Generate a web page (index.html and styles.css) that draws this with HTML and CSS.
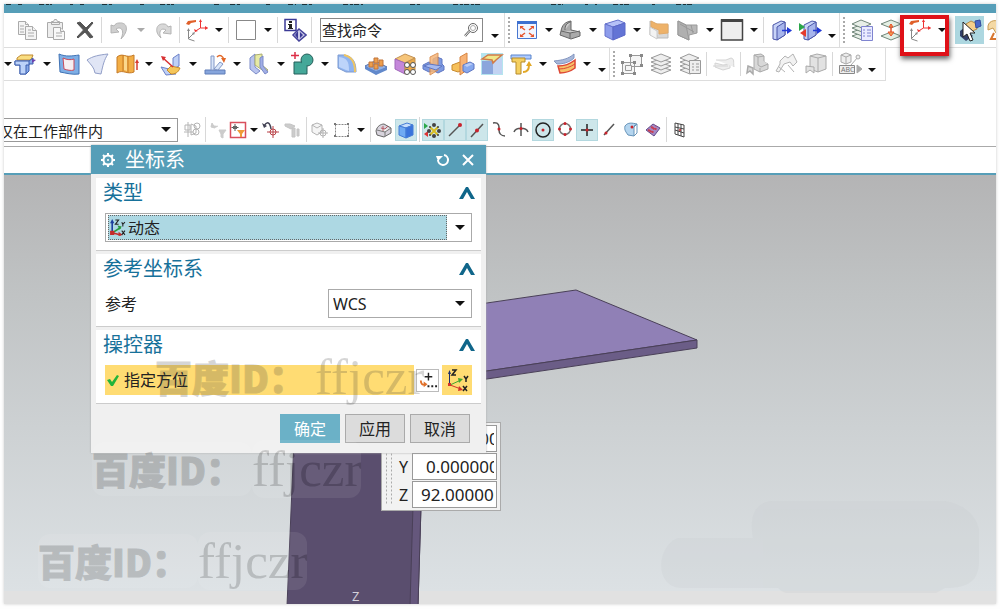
FILE: index.html
```html
<!DOCTYPE html>
<html lang="zh-CN">
<head>
<meta charset="utf-8">
<title>坐标系</title>
<link rel="stylesheet" href="styles.css">
</head>
<body>
<div class="app">
  <header class="menubar">
    <svg width="992" height="2" aria-hidden="true"><path stroke="#17313b" stroke-width="2" stroke-dasharray="5 2 3 1" d="M2 0h6M14 0h4M35 0h13M66 0h3M76 0h4M98 0h11M136 0h4M156 0h14M210 0h5M226 0h10M262 0h4M284 0h8M298 0h11M339 0h20M406 0h10M449 0h27M547 0h12M581 0h3M591 0h2M609 0h16M648 0h3M672 0h16"/></svg>
  </header>

  <div class="toolbar row-one">
    <div class="group first">
      <button class="tool" aria-label="复制"><svg viewBox="0 0 24 24"><g fill="#f4f4f4" stroke="#aaa"><path d="M3.500 3.500h7l3 3v10h-10z"/><path d="M10.500 8.500h7l4 4v9h-11z"/><path d="M10.500 3.500v3h3M17.500 8.500v4h4M5 8h4M5 11h4M5 14h4M13 15h6M13 18h6M13 12h3"/></g></svg></button>
      <button class="tool" aria-label="粘贴"><svg viewBox="0 0 24 24"><g fill="#eee" stroke="#aaa"><path d="M3.500 4.500h15v15h-15zM7.500 6.500v-3h2l1-2h2l1 2h2v3z"/><path fill="#f8f8f8" d="M9.500 9.500h7l4 4v8h-11z"/><path d="M16.500 9.500v4h4M12 15h6M12 18h6"/></g></svg></button>
      <button class="tool" aria-label="删除"><svg viewBox="0 0 24 24"><path fill="#555" stroke="#555" d="M4 5l3-1 6 6 6-6 1 1-6 7 6 7-3 1-5-6-7 6-1-1 6.500-7z"/></svg></button>
      <span class="sep"></span>
      <button class="tool" aria-label="撤消"><svg viewBox="0 0 24 24"><path fill="#cfcfcf" stroke="#b4b4b4" d="M4 7v8l8-1-3-3c5-3 9 1 5 10 8-8 7-17-2-16-2 0-4 1-5 3z"/></svg></button>
      <button class="drop muted" aria-label="撤消列表"></button>
      <button class="tool" aria-label="重做"><svg viewBox="0 0 24 24"><path fill="#d8d8d8" stroke="#b4b4b4" d="M20 8v8l-8-1 3-3c-5-3-8 2-5 8-7-6-5-15 3-14 2 0 3 1 4 3z"/></svg></button>
      <span class="sep"></span>
      <button class="tool" aria-label="坐标系"><svg viewBox="0 0 24 24"><path stroke="#e33" d="M15.500 2v8h7M15.500 10l-5 3"/><path fill="#e33" d="M14 4l1.500-3L17 4zM20 8l3 2-3 2zM9 11l1 3 3-1z"/><path fill="#e0602a" d="M1 6l2-3 8-1v2l-5 1-2 2z"/><path stroke="#888" d="M3.500 11v10l6 2M4 20l5-5"/><path fill="#888" d="M2 13l1.500-3L5 13zM7 15l3-1-1 3z"/></svg></button>
      <button class="drop" aria-label="坐标系列表"></button>
      <span class="sep"></span>
      <button class="tool" aria-label="颜色"><svg viewBox="0 0 24 24"><path fill="#fff" stroke="#888" d="M2.500 2.500h19v19h-19z"/></svg></button>
      <button class="drop" aria-label="颜色列表"></button>
      <span class="sep"></span>
      <button class="tool" aria-label="信息"><svg viewBox="0 0 24 24"><path fill="#fff" stroke="#3b3a96" stroke-width="1.500" d="M2 1.500h11v11H2z"/><path fill="#222" d="M6 3h3v2H6zM5 6h4v4h1v1H5v-1h1V7H5z"/><path fill="#c9c9e8" stroke="#45439a" stroke-width="1.500" d="M16 11l7 6-7 6-6-6z"/><path fill="#3b3a96" d="M15 13v8l-3-4zM17 14l3 3-3 3z"/></svg></button>
      <span class="sep"></span>
      <label class="search"><input type="text" value="查找命令" aria-label="查找命令"><svg viewBox="0 0 16 16"><circle cx="10" cy="6" r="4.500" fill="#fff" stroke="#666"/><circle cx="10" cy="6" r="2.500" fill="none" stroke="#aaa"/><path d="M6.500 9L2 14" stroke="#666" stroke-width="2.500"/><path d="M6.500 9L2 14" stroke="#eee"/></svg></label>
      <button class="drop low" aria-label="工具条选项"></button>
    </div>
    <div class="group">
      <span class="grip"></span>
      <button class="tool" aria-label="适合窗口"><svg viewBox="0 0 24 24"><path fill="#f1f5ff" stroke="#4777d0" d="M2.500 3.500h19v17h-19z"/><path fill="#3d70d0" d="M2 3h20v3H2z"/><path stroke="#e6552e" stroke-width="1.500" d="M6 9l4 3M18 9l-4 3M6 18l4-3M18 18l-4-3"/><path fill="#e6552e" d="M5 8h4l-4 3zM19 8h-4l4 3zM5 19h4l-4-3zM19 19h-4l4-3z"/></svg></button>
      <button class="drop" aria-label="适合窗口列表"></button>
      <button class="tool" aria-label="定向视图"><svg viewBox="0 0 24 24"><path fill="#aaa" stroke="#666" d="M2 13c1-6 4-9 10-10v9l9 2v4l-9 3L1 17z"/><path fill="#ccc" stroke="#666" d="M2 13l9 2 10-2M11 15v5M6 12c0-4 1-7 6-8"/></svg></button>
      <button class="drop" aria-label="定向视图列表"></button>
      <button class="tool" aria-label="着色"><svg viewBox="0 0 24 24"><path fill="#b5c1f7" stroke="#6672cc" d="M2 6l13-4 7 3-12 4z"/><path fill="#8d9ceb" stroke="#6672cc" d="M2 6l8 3v13l-8-4z"/><path fill="#6374d5" stroke="#5b68c8" d="M10 9l12-4v12l-12 5z"/></svg></button>
      <button class="drop" aria-label="着色列表"></button>
      <button class="tool" aria-label="剪切截面"><svg viewBox="0 0 24 24"><path fill="#d8d8d8" stroke="#bbb" d="M3 3l6 3 12 1v13H10v-3H3z"/><path fill="#eeb269" stroke="#e0aa6a" d="M4 3l6 3h11v9l-9 1v-4L4 9z"/><path fill="#f3f3f3" stroke="#ccc" d="M3 9l7 4v8l-7-4z"/></svg></button>
      <button class="tool" aria-label="编辑截面"><svg viewBox="0 0 24 24"><path fill="#b8b8b8" stroke="#999" d="M2 3l8 4h11v8l-8 2v5L2 17z"/><path fill="#b0b0b0" stroke="#999" d="M2 3l8 4 3 15-11-5zM4 6l14 8M15 7l2 8"/></svg></button>
      <button class="drop" aria-label="截面列表"></button>
      <button class="tool" aria-label="背景"><svg viewBox="0 0 24 24"><path fill="#eee" stroke="#444" stroke-width="1.500" d="M1.500 2h21v20h-21z"/><path fill="#444" d="M1 1h22v3H1z"/></svg></button>
      <button class="drop" aria-label="背景列表"></button>
      <span class="sep"></span>
      <button class="tool" aria-label="显示"><svg viewBox="0 0 24 24"><path fill="#c8d3f7" stroke="#4a55a8" d="M4 7l8-4 4 1v13l-8 5-4-1z"/><path fill="#a7b5ec" stroke="#4a55a8" d="M8 9l8-5v13l-8 5z"/><path stroke="#2239d6" stroke-width="1.500" d="M13 12.500h6"/><path fill="#2239d6" d="M18 9l5 3.500-5 3.500z"/></svg></button>
      <button class="tool" aria-label="隐藏"><svg viewBox="0 0 24 24"><path fill="#c8d3f7" stroke="#4a55a8" d="M6 7l8-4 4 1v13l-8 5-4-1z"/><path fill="#a7b5ec" stroke="#4a55a8" d="M10 9l8-5v13l-8 5z"/><path fill="#2aa64a" d="M1 5l6 4-6 4z"/><path fill="#e43b2e" d="M8 11l-6 4 6 4z"/><path stroke="#2239d6" stroke-width="1.500" d="M15 12.500h6"/><path fill="#2239d6" d="M19 9l5 3.500-5 3.500z"/></svg></button>
      <button class="drop low" aria-label="工具条选项"></button>
    </div>
    <div class="group last">
      <span class="grip"></span>
      <button class="tool" aria-label="图层设置"><svg viewBox="0 0 24 24"><g fill="#e8efe8" stroke="#71877a"><path d="M2 18l9-3 10 3-9 4z"/><path d="M2 14l9-3 10 3-9 4z"/><path d="M2 10l9-3 10 3-9 4z"/><path d="M2 6l9-4 10 4-9 4z"/></g><path fill="#e9ebff" stroke="#7f84d0" d="M11.500 8.500h11v14h-11z"/><path stroke="#7f84d0" d="M13 12h2M13 15h2M13 18h2M17 12h4M17 15h4M17 18h4"/></svg></button>
      <button class="tool" aria-label="移动至图层"><svg viewBox="0 0 24 24"><g fill="#e4efe4" stroke="#71877a"><path d="M2 6l10-4 10 4-10 4z"/><path d="M2 18l10-4 10 4-10 4z"/></g><path stroke="#e6552e" stroke-width="1.500" d="M12 6v8"/><path fill="#f29a50" stroke="#e6552e" d="M10 9h4l-2-3zM9 14h6l-3 4z"/></svg></button>
      <span class="marked">
        <button class="tool" aria-label="动态坐标系"><svg viewBox="0 0 24 24"><path stroke="#e33" d="M15.500 2v8h7M15.500 10l-5 3"/><path fill="#e33" d="M14 4l1.500-3L17 4zM20 8l3 2-3 2zM9 11l1 3 3-1z"/><path fill="#e0602a" d="M1 6l2-3 8-1v2l-5 1-2 2z"/><path stroke="#888" d="M3.500 11v10l6 2M4 20l5-5"/><path fill="#888" d="M2 13l1.500-3L5 13zM7 15l3-1-1 3z"/></svg></button>
        <button class="drop" aria-label="坐标系命令列表"></button>
      </span>
      <button class="tool on" aria-label="选择对象"><svg viewBox="0 0 24 24"><path fill="#f6cf8a" stroke="#b58c48" d="M8 6l5-3 6 3v5l-7 3-4-3z"/><path fill="#4a68c8" stroke="#334c9e" d="M17 3l5-1 1 6-5 2z"/><path fill="#32406a" d="M2 13l4-3 9 8-7 5-6-5z"/><path fill="#fff" stroke="#222" d="M5 4v15l4-3 3 7 3-1-3-7h5z"/></svg></button>
      <button class="tool" aria-label="可视化"><svg viewBox="0 0 24 24"><path fill="#f4d9a5" stroke="#c79c54" d="M1 8c1-6 9-7 14-3v9l-6 1-3-5-5 2z"/><path stroke="#d8752e" stroke-width="2" d="M7 15l-3 6h7"/></svg></button>
    </div>
  </div>

  <div class="toolbar row-two">
    <div class="group">
      <button class="drop cut" aria-label="特征列表"></button>
      <button class="tool" aria-label="拉伸"><svg viewBox="0 0 24 24"><path fill="#f9dd80" stroke="#c08a32" d="M4 6l4-3h12l-2 5H4z"/><path fill="#85a8e8" stroke="#3d5fae" d="M2 9h14l4-3v6h-4v7l-3 3H7v-9H2z"/><path fill="#bcd2f8" stroke="#3d5fae" d="M2 9h14v4h-3v9H7v-9H2z"/><path fill="#6c42ad" d="M19 7l4 1-4 3z"/></svg></button>
      <button class="drop" aria-label="拉伸列表"></button>
      <button class="tool" aria-label="通过曲线网格"><svg viewBox="0 0 24 24"><path fill="#7eaee5" stroke="#4173b5" d="M2 2c7 3 13 2 20 1v19c-7 1-13-1-19-2z"/><path fill="#f6eff1" stroke="#c84a5b" d="M6 6c4 2 8 2 11 1v11c-3 1-7 0-10-1z"/></svg></button>
      <button class="tool" aria-label="扫掠面"><svg viewBox="0 0 24 24"><path fill="#e0e5f5" stroke="#929fc8" d="M1 8c6-4 12-5 21-6-4 6-5 11-7 20l-6-1C8 15 5 13 1 8z"/></svg></button>
      <button class="tool" aria-label="抽取"><svg viewBox="0 0 24 24"><path fill="#f3ae45" stroke="#c47a28" d="M2 5c6-5 9 2 17-2v17c-7 3-11-3-17 1z"/><path stroke="#c47a28" d="M8 3v16M13 4v17"/><path fill="#fbd88d" d="M9 4l3 1v14l-3-1z"/><path stroke="#d83d2e" stroke-width="1.500" d="M22 10v8"/><path fill="#d83d2e" d="M20 11l2-4 2 4z"/></svg></button>
      <button class="drop" aria-label="抽取列表"></button>
      <button class="tool" aria-label="面倒圆"><svg viewBox="0 0 24 24"><path fill="#bfd0f5" stroke="#6b80c8" d="M2 15l8 2 7 5-10 1zM14 6l6-4v12l-6 3z"/><path fill="#f5c65a" stroke="#c98c29" d="M12 14l9 2c-2 5-5 6-9 6l-4-4z"/><path stroke="#d83032" stroke-width="1.500" d="M4 6l10 9"/><path fill="#d83032" d="M2 4l5 1-3 4z"/></svg></button>
      <button class="drop" aria-label="面倒圆列表"></button>
      <button class="tool" aria-label="修剪体"><svg viewBox="0 0 24 24"><path fill="#86a5dc" stroke="#5f7cb8" d="M2 18h20v4H2z"/><path fill="#d9e6fa" stroke="#8297c6" d="M8 4h3v14H8zM11 17l6-7 3 2-5 6z"/><path stroke="#e26828" stroke-width="1.500" d="M14 5c3-3 6-1 7 3"/><path fill="#e26828" d="M18 6h5l-2 5z"/></svg></button>
      <button class="drop" aria-label="修剪体列表"></button>
      <button class="tool" aria-label="镜像"><svg viewBox="0 0 24 24"><path fill="#b9c4ee" stroke="#7b8bc8" d="M3 6l5-4v13l5 4-4 3-6-5z"/><path fill="#e6eaa5" stroke="#adae70" d="M8 3l7-1v11l6 5-3 2-10-7z"/><path fill="#a1aee6" stroke="#7b8bc8" d="M13 6l3-2v10l5 6-3 2-5-7z"/></svg></button>
      <button class="drop" aria-label="镜像列表"></button>
      <button class="tool" aria-label="合并"><svg viewBox="0 0 24 24"><g fill="#45a899" stroke="#255f5a"><path d="M3 10h13v12H3z"/><circle cx="16" cy="8" r="6"/></g><path fill="#45a899" d="M10.500 10.500h5v5h-5z"/><path stroke="#dc2e46" stroke-width="1.500" d="M4 0v7M0 3.500h8"/></svg></button>
      <button class="drop" aria-label="合并列表"></button>
      <button class="tool" aria-label="边倒圆"><svg viewBox="0 0 24 24"><path fill="#8fb4f0" stroke="#7e9bd0" d="M3 3h7c8 2 11 7 11 17H11L3 16z"/><path stroke="#f0c560" stroke-width="2" d="M9 3c8 2 11 7 11 17"/><path fill="#bdd4fa" d="M4 5c8 1 10 4 10 14l-3-1-7-3z"/></svg></button>
      <button class="tool" aria-label="阵列特征"><svg viewBox="0 0 24 24"><path fill="#91b1e5" stroke="#5371ae" d="M1 14l10-5 12 6-11 7z"/><path fill="#6289cb" d="M1 14l11 5v4L1 17zM12 19l11-4v3l-11 5z"/><g fill="#ee9e4b" stroke="#c0753a"><path d="M5 10h4v5H5zM10 6h4v5h-4zM15 8h4v6h-4zM10 12h4v5h-4z"/></g></svg></button>
      <button class="tool" aria-label="阵列面"><svg viewBox="0 0 24 24"><path fill="#f6c579" stroke="#c39152" d="M2 7l10-5 10 4-10 5z"/><path fill="#c487da" stroke="#a068ba" d="M2 7l10 4v11L2 17z"/><path fill="#e9a94a" stroke="#c39152" d="M12 11l10-5v12l-10 4z"/><g fill="#fff" stroke="#555"><circle cx="14" cy="13" r="2.500"/><circle cx="20" cy="13" r="2.500"/><circle cx="14" cy="20" r="2.500"/><circle cx="20" cy="20" r="2.500"/></g></svg></button>
      <button class="tool" aria-label="镜像特征"><svg viewBox="0 0 24 24"><path fill="#7d9ae2" stroke="#5f76c2" d="M1 13l6-3 4 2V7l4-2 5 2v5l2 2v4l-6 3-4-2-5 1-6-3z"/><path fill="#f6b678" stroke="#d78440" d="M8 5l8-4v17l-8 5z" opacity=".85"/><path fill="#a4b9f0" stroke="#5f76c2" d="M2 14l5-2 13 2-6 4z"/></svg></button>
      <button class="tool" aria-label="镜像面"><svg viewBox="0 0 24 24"><path fill="#f6c05a" stroke="#c88a2d" d="M1 13l8-3 5 2v5l-7 3-6-2z"/><path fill="#f7b376" stroke="#d78440" d="M9 5l7-4v17l-7 5z"/><path fill="#86a8ee" stroke="#5f76c2" d="M12 13l7-3 4 2v5l-7 4-4-2z"/><path fill="#b9ccf8" d="M13 13l6-2 3 1-6 3z"/></svg></button>
      <button class="tool" aria-label="抽壳"><svg viewBox="0 0 24 24"><path fill="#b5e5ef" d="M1 1h22v22H1z"/><path fill="#8ba6dc" d="M2 9h11v13H2z"/><path fill="#c2d3f2" d="M13 9l9-3v16h-9z"/><path fill="#f0e789" stroke="#d17b48" stroke-width="1.500" d="M2 7l6-4h14l-6 5-3 3-1-3z"/></svg></button>
      <button class="tool" aria-label="加厚"><svg viewBox="0 0 24 24"><path fill="#aecbff" stroke="#5b85cb" d="M2 3h20v4H2z"/><path fill="#f5d060" stroke="#b78b29" d="M3 6h13v4h-4v12H7V10H3z"/><path stroke="#e2a827" stroke-width="2" d="M14 20c5 0 6-3 6-7"/><path fill="#e2a827" d="M17 14l3-5 3 5z"/></svg></button>
      <button class="drop" aria-label="加厚列表"></button>
      <button class="tool" aria-label="偏置曲面"><svg viewBox="0 0 24 24"><path fill="#a8b8da" stroke="#8396c0" d="M1 9c9-1 14-2 20-7v4C16 11 9 12 4 12z"/><path fill="#f7c268" stroke="#dd4735" stroke-width="1.500" d="M5 14c6 0 12-2 17-6v8c-4 3-9 5-15 5z"/><path stroke="#dd4735" d="M6 17c6 0 11-2 16-5"/></svg></button>
      <button class="drop" aria-label="偏置曲面列表"></button>
      <button class="drop low" aria-label="工具条选项"></button>
    </div>
    <div class="group end">
      <span class="grip"></span>
      <button class="tool" aria-label="组"><svg viewBox="0 0 24 24"><g stroke="#999" fill="#f5f5f5"><path d="M10.500 3.500h11v11h-11zM2.500 10.500h12v11h-12z"/><path d="M5.500 13.500h6v5h-6z"/></g><g fill="#888"><path d="M9 2h3v3H9zM20 2h3v3h-3zM20 12h3v3h-3zM1 9h3v3H1zM13 9h3v3h-3zM1 20h3v3H1zM13 20h3v3h-3z"/></g></svg></button>
      <button class="tool" aria-label="图层"><svg viewBox="0 0 24 24"><g fill="#eee" stroke="#999"><path d="M2 18l10-3 10 3-10 4z"/><path d="M2 14l10-3 10 3-10 4z"/><path d="M2 10l10-3 10 3-10 4z"/><path d="M2 6l10-4 10 4-10 4z"/></g></svg></button>
      <button class="tool" aria-label="图层列表"><svg viewBox="0 0 24 24"><g fill="#eee" stroke="#999"><path d="M2 18l9-3 10 3-9 4z"/><path d="M2 14l9-3 10 3-9 4z"/><path d="M2 10l9-3 10 3-9 4z"/><path d="M2 6l9-4 10 4-9 4z"/><path d="M11.500 8.500h11v13h-11z"/><path d="M14 12h2M14 15h2M14 18h2M18 12h3M18 15h3M18 18h3"/></g></svg></button>
      <span class="sep"></span>
      <button class="tool" aria-label="移动"><svg viewBox="0 0 24 24"><g fill="#eee" stroke="#d4d4d4"><path d="M3 11l8 2 7-1v4l-7 2-8-3z"/><path d="M4 8h10l5-2c4 1 2 4 3 9M1 14h15"/></g></svg></button>
      <span class="sep"></span>
      <button class="tool" aria-label="移动面"><svg viewBox="0 0 24 24"><g fill="#d8d8d8" stroke="#aaa"><path d="M8 3l7-1 3 2v6l4 2v5l-8 3-6-3z"/><path d="M8 3l4 2v8l3 2 7-3M12 5l6-1M14 16v4"/><path stroke-width="1.500" d="M2 14l5 2v6l-3-3-3 2z"/></g></svg></button>
      <button class="tool" aria-label="拉出面"><svg viewBox="0 0 24 24"><g fill="#f2f2f2" stroke="#b4b4b4"><path d="M5 9l5-5 3 2 5-4 4 8-4 4-3-4-6 2-5 8-3-1 4-7z"/><path d="M4 15l6 5M13 13l6 7"/></g></svg></button>
      <button class="tool" aria-label="替换面"><svg viewBox="0 0 24 24"><g fill="#e2e2e2" stroke="#aaa"><path d="M6 4l7-2 9 2v13l-8 3-8-3z"/><path d="M6 4l8 2 8-2M14 6v14"/><path d="M2 14l8 1v6l-4-3-4 3z"/></g></svg></button>
      <span class="sep"></span>
      <button class="tool" aria-label="注释"><svg viewBox="0 0 24 24"><g fill="#eee" stroke="#aaa"><path d="M3 3l5-2 5 2v7l-5 2-5-2z"/><path d="M3 3l5 2 5-2M8 5v7M20 5l-7 8"/><circle cx="20" cy="5" r="2"/><path stroke="#888" d="M1.500 13.500h15v8h-15z"/><path fill="#aaa" d="M19 13l5 4-5 4z"/></g><text x="3" y="20" font-size="7" fill="#777">ABC</text></svg></button>
      <button class="drop low" aria-label="工具条选项"></button>
    </div>
  </div>

  <div class="toolbar row-three">
    <div class="scope"><select aria-label="选择范围"><option>仅在工作部件内</option></select></div>
    <button class="pick" aria-label="约束"><svg viewBox="0 0 20 20"><g stroke="#b4b4b4"><path d="M3 5h5v5H3zM9 4l5 2v7l-5 2zM6 2v15M2 12h9"/><circle cx="15" cy="6" r="3"/><circle cx="14" cy="12" r="3"/></g></svg></button>
    <span class="sep"></span>
    <button class="pick narrow" aria-label="过滤器"><svg viewBox="0 0 20 20"><path fill="#ccc" stroke="#ccc" d="M3 5c3 4 5 2 7 1M4 3l-1 4 4 1zM11 10h7l-3 4v4l-2-1v-3z"/></svg></button>
    <button class="pick narrow" aria-label="过滤设置"><svg viewBox="0 0 20 20"><path stroke="#d94f5d" stroke-width="1.500" d="M2.500 2.500h15v15h-15z"/><path stroke="#555" d="M7 4v7M3.500 7.500h7"/><path fill="#666" d="M5 6h4v3H5z"/><path fill="#ef9b38" d="M9 10h8l-3 4v3h-2v-3z"/></svg></button>
    <button class="drop slim" aria-label="过滤列表"></button>
    <button class="pick" aria-label="捕捉"><svg viewBox="0 0 20 20"><path stroke="#445" stroke-width="1.500" d="M3 6c3-5 6-4 7 3"/><path fill="#445" d="M1 3l2 5 3-2z"/><g stroke="#b94348"><circle cx="12" cy="12" r="3"/><path d="M12 6v12M6 12h12"/></g></svg></button>
    <button class="pick" aria-label="全部"><svg viewBox="0 0 20 20"><path fill="#ccc" stroke="#c4c4c4" d="M2 4h5l5 2-4 3-6-3zM9 8h3v9H9zM14 9h2v7h-2z"/></svg></button>
    <span class="sep"></span>
    <button class="pick" aria-label="选择体"><svg viewBox="0 0 20 20"><g stroke="#b4b4b4"><path fill="#f5f5f5" d="M2 5l5-2 5 2v7l-5 3-5-3z"/><path d="M2 5l5 3 5-3"/><circle cx="13" cy="13" r="3"/><path d="M13 8v10M8 13h10"/></g></svg></button>
    <button class="pick" aria-label="矩形选择"><svg viewBox="0 0 20 20"><path stroke="#888" stroke-dasharray="2 1" d="M3.500 4.500h13v12h-13z"/><path fill="#777" d="M2 3h2v2H2zM15 3h2v2h-2zM2 15h2v2H2zM15 15h2v2h-2z"/></svg></button>
    <button class="drop" aria-label="选择方式列表"></button>
    <span class="sep"></span>
    <button class="pick" aria-label="面规则"><svg viewBox="0 0 20 20"><path fill="#d7d3dc" stroke="#666" d="M2 11c1-5 5-7 8-7l7 4v5l-7 4-7-2z"/><path fill="#eee" stroke="#777" d="M3 10l8 2 6-4M11 12v4"/><path stroke="#b65d67" d="M7 8l4 1 3-3M9 6v5"/></svg></button>
    <button class="pick on" aria-label="体规则"><svg viewBox="0 0 20 20"><path fill="#c6defc" stroke="#457dd6" d="M3 6l8-3 6 2-7 3z"/><path fill="#6faaf3" stroke="#457dd6" d="M3 6l7 2v10l-7-3z"/><path fill="#3a74dc" stroke="#457dd6" d="M10 8l7-3v10l-7 3z"/></svg></button>
    <span class="sep"></span>
    <button class="pick on" aria-label="启用捕捉点"><svg viewBox="0 0 20 20"><path fill="#2aa84a" d="M1 3l4 3-4 3z"/><path fill="#dd3434" d="M5 11l-4 3 4 3z"/><path stroke="#d9bd22" stroke-width="2" d="M7 7l8 8M15 7l-8 8"/><g fill="#444"><circle cx="11" cy="5" r="2"/><circle cx="11" cy="16" r="2"/><circle cx="6" cy="11" r="2"/><circle cx="16" cy="11" r="2"/><circle cx="7" cy="7" r="1"/><circle cx="15" cy="7" r="1"/><circle cx="7" cy="15" r="1"/><circle cx="15" cy="15" r="1"/></g></svg></button>
    <button class="pick on" aria-label="端点"><svg viewBox="0 0 20 20"><path stroke="#555" stroke-width="1.500" d="M4 16L15 5"/><circle cx="15" cy="5" r="2" fill="#c8232c"/></svg></button>
    <button class="pick on" aria-label="中点"><svg viewBox="0 0 20 20"><path stroke="#555" stroke-width="1.500" d="M4 17L16 4"/><circle cx="10" cy="10.500" r="2" fill="#c8232c"/></svg></button>
    <button class="pick" aria-label="控制点"><svg viewBox="0 0 20 20"><path stroke="#555" stroke-width="1.500" d="M4 3c7-1 6 4 6 7s2 6 6 6"/><circle cx="10" cy="9" r="1.500" fill="#c8232c"/></svg></button>
    <button class="pick" aria-label="交点"><svg viewBox="0 0 20 20"><path stroke="#555" stroke-width="1.500" d="M10 3v13M3 12c2-5 12-5 14 0"/><circle cx="10" cy="8.500" r="1.500" fill="#c8232c"/></svg></button>
    <button class="pick on" aria-label="圆弧中心"><svg viewBox="0 0 20 20"><circle cx="10" cy="10" r="7" stroke="#222" stroke-width="1.500"/><circle cx="10" cy="10" r="1.500" fill="#c8232c"/></svg></button>
    <button class="pick" aria-label="象限点"><svg viewBox="0 0 20 20"><circle cx="10" cy="9" r="5.500" stroke="#777" stroke-width="1.500"/><g fill="#c8232c"><circle cx="10" cy="3.500" r="1.500"/><circle cx="10" cy="14.500" r="1.500"/><circle cx="4.500" cy="9" r="1.500"/><circle cx="15.500" cy="9" r="1.500"/></g></svg></button>
    <button class="pick on" aria-label="现有点"><svg viewBox="0 0 20 20"><path stroke="#222" stroke-width="1.500" d="M10 4v12M4 10h12"/><circle cx="10" cy="10" r="1.500" fill="#c8232c"/></svg></button>
    <button class="pick" aria-label="曲线上的点"><svg viewBox="0 0 20 20"><path stroke="#555" stroke-width="1.500" d="M5 15L15 4"/><circle cx="7" cy="13" r="1.500" fill="#c8232c"/></svg></button>
    <button class="pick" aria-label="面上的点"><svg viewBox="0 0 20 20"><path fill="#b4d5ef" stroke="#6693b8" d="M4 6c3-4 7-3 12-2l-3 3v9l-6-1C5 12 3 10 4 6z"/><path stroke="#6693b8" d="M13 6l3-2v9l-3 3"/><circle cx="11" cy="7" r="1.500" fill="#c8232c"/></svg></button>
    <button class="pick" aria-label="有界栅格点"><svg viewBox="0 0 20 20"><path fill="#a48ac5" stroke="#624a8b" d="M3 10l7-6 7 4-6 8z"/><path stroke="#c83d52" stroke-dasharray="2 2" stroke-width="2" d="M5 10l7 3M8 7l7 3M7 12l6-6"/></svg></button>
    <span class="sep"></span>
    <button class="pick" aria-label="栅格"><svg viewBox="0 0 20 20"><path stroke="#444" d="M5 3l9 2v12l-9-3zM8 4v11M11 4v12M5 7l9 2M5 10l9 3"/><circle cx="10" cy="10" r="1" fill="#c8232c"/></svg></button>
  </div>

  <div class="cue"></div>

  <main class="canvas">
    <svg class="model" width="992" height="429" viewBox="4 175 992 429" aria-hidden="true">
      <g fill="#c8cdcf" opacity=".25">
        <path d="M678 538H753C748 510 760 502 772 501H945C965 505 976 515 979 530V560C979 580 970 588 945 588H682C654 588 656 546 678 538Z"/>
        <path d="M788 566H862V543H925V530H978V565C976 580 960 588 945 588L936 593H786C772 588 770 572 788 566Z"/>
      </g>
      <g stroke="#4a4058">
        <path fill="#9080b6" d="M480 304L576 290L697 340L480 372Z"/>
        <path fill="#6b5d87" d="M480 372L697 340V348L480 380Z"/>
        <path fill="#5a4e6e" d="M294 440L287 606H418L423 440Z"/>
        <path fill="#65577c" d="M415 440L410 606H418L423 440Z"/>
      </g>
      <text x="352" y="601" font-size="13" fill="#d3d0da">Z</text>
    </svg>

    <form class="coords">
      <span class="grip"></span>
      <label><span>X</span><input type="text" class="short" value="0.000000"></label>
      <label><span>Y</span><input type="text" class="short" value="0.000000"></label>
      <label><span>Z</span><input type="text" value="92.000000"></label>
    </form>
  </main>

  <section class="dialog" role="dialog" aria-labelledby="dialog-title">
    <header class="titlebar">
      <svg class="gear" viewBox="0 0 16 16"><circle cx="8" cy="8" r="4.500" stroke="#fff" stroke-width="2"/><circle cx="8" cy="8" r="1" fill="#fff"/><path stroke="#fff" stroke-width="2" d="M8 1v2M8 13v2M1 8h2M13 8h2M3 3l2 2M11 11l2 2M13 3l-2 2M5 11l-2 2"/></svg>
      <h1 id="dialog-title">坐标系</h1>
      <button class="tb" aria-label="重置"><svg viewBox="0 0 16 16"><path stroke="#fff" stroke-width="2" d="M9 3a5 5 0 1 1-6 5"/><path fill="#fff" d="M1 4h7L3 9z"/></svg></button>
      <button class="tb" aria-label="关闭"><svg viewBox="0 0 16 16"><path stroke="#fff" stroke-width="2" d="M3 3l10 10M13 3L3 13"/></svg></button>
    </header>
    <div class="panel">
      <h2>类型 <button class="fold" aria-label="折叠类型"><svg viewBox="0 0 18 14"><path d="M1 13L8 1h2l7 12h-4L9 6l-4 7z"/></svg></button></h2>
      <div class="kind">
        <div class="kind-value">
          <svg viewBox="0 0 16 16"><path stroke="#1d3e9e" stroke-width="1.500" d="M3 13V3"/><path fill="#1d3e9e" d="M1 4l2-4 2 4z"/><path stroke="#2a9a3e" stroke-width="1.500" d="M3 13l8-5"/><path fill="#2a9a3e" d="M8 6l4 1-2 3z"/><path stroke="#c42b2b" stroke-width="1.500" d="M3 13l8 2"/><path fill="#c42b2b" d="M1 11h4v4H1zM9 12l4 3-4 1z"/><path stroke="#222" d="M6 1h3L6 5h3M12 3l1 2 2-2M13 5v2M12 11l3 4M15 11l-3 4"/></svg>
          <select aria-label="类型"><option>动态</option></select>
        </div>
        <i class="tri"></i>
      </div>
    </div>
    <div class="panel">
      <h2>参考坐标系 <button class="fold" aria-label="折叠参考坐标系"><svg viewBox="0 0 18 14"><path d="M1 13L8 1h2l7 12h-4L9 6l-4 7z"/></svg></button></h2>
      <div class="field">
        <label for="ref">参考</label>
        <div class="combo"><select id="ref"><option>WCS</option></select><i class="tri"></i></div>
      </div>
    </div>
    <div class="panel">
      <h2>操控器 <button class="fold" aria-label="折叠操控器"><svg viewBox="0 0 18 14"><path d="M1 13L8 1h2l7 12h-4L9 6l-4 7z"/></svg></button></h2>
      <div class="orient">
        <div class="step"><svg viewBox="0 0 14 14"><path fill="#22b43a" d="M1 7l3-1 2 3 5-7 2 1-6 10H5z"/></svg><span>指定方位</span></div>
        <button class="point" aria-label="点对话框"><svg viewBox="0 0 22 22"><path stroke="#222" stroke-width="1.500" d="M12 3v8M8 7h8"/><path stroke="#e0702a" stroke-width="2" d="M4 11c0 4 2 5 5 4"/><path fill="#e0702a" d="M7 12l4 3-4 3z"/><path fill="#222" d="M11 16h2v2h-2zM15 16h2v2h-2zM19 16h2v2h-2z"/></svg></button>
        <button class="triad" aria-label="操控器"><svg viewBox="0 0 24 24"><path stroke="#1c2d6e" d="M4.500 17V4"/><path fill="#1c2d6e" d="M3 6l1.500-4L6 6z"/><path stroke="#45a72e" d="M5 17l11-5"/><path fill="#45a72e" d="M13 10l5 1-4 4z"/><path stroke="#d3342a" d="M5 17l11 4"/><path fill="#d3342a" d="M3 15h3v3H3zM14 18l4 4-5 1z"/><path stroke="#222" stroke-width="1.500" d="M7 2h4L7 7h4M19 8l2 3 2-3M21 11v3M18 18l4 5M22 18l-4 5"/></svg></button>
      </div>
    </div>
    <footer class="actions">
      <button class="btn primary">确定</button>
      <button class="btn">应用</button>
      <button class="btn">取消</button>
    </footer>
  </section>

  <p class="mark mark-a"><b>百度ID：</b><span>ffjczr</span></p>
  <p class="mark mark-b"><b>百度ID：</b><span>ffjczr</span></p>
  <p class="mark mark-c"><b>百度ID：</b><span>ffjczr</span></p>
</div>
</body>
</html>
```

FILE: styles.css
```css
* { box-sizing: border-box; }

body {
  margin: 0;
  padding: 4px 4px 5px;
  background: #fefefe;
  color: #222;
  font: 16px/24px "Noto Sans", "Noto Sans CJK SC", sans-serif;
}

button, input, select { font: inherit; color: inherit; }
button { padding: 0; border: 0; background: none; }
h1, h2, p { margin: 0; font-weight: 400; }
svg { display: block; fill: none; flex: none; }

.app {
  position: relative;
  display: flex;
  flex-direction: column;
  min-height: calc(100vh - 9px);
  background: #fff;
  box-shadow: 0 0 3px #ccc;
}

.menubar { height: 9px; background: #569eb8; overflow: hidden; }

/* toolbars */
.toolbar { display: flex; overflow: hidden; }
.row-one { height: 35px; border-bottom: 1px solid #ddd; overflow: visible; }
.row-two { height: 33px; }
.row-three { height: 34px; margin-top: 32px; align-items: center; border-bottom: 1px solid #aaa; }
.group { display: flex; align-items: center; flex: none; }
.group + .group { border-left: 1px solid #ddd; }
.row-two .group { border-bottom: 1px solid #ddd; }
.first { padding: 0 2px 0 8px; }
.last { flex: 1 0 0; min-width: 0; clip-path: inset(0 0 -20px 0); }
.end { padding-right: 6px; border-right: 1px solid #ddd; }

.tool { display: grid; place-items: center; flex: none; width: 29px; height: 28px; }
.tool svg { width: 24px; height: 24px; }
.pick { display: grid; place-items: center; flex: none; width: 22px; height: 22px; }
.pick svg { width: 20px; height: 20px; }
.narrow { width: 20px; }
.on { background: #cde6ea; border: 1px solid #b3d8df; }
.tool.on { background: #add7e0; border-color: #add7e0; }
.sep { flex: none; align-self: stretch; width: 5px; margin: 4px 0; background: linear-gradient(#d8d8d8, #d8d8d8) center / 1px 100% no-repeat; }
.grip { flex: none; align-self: stretch; width: 7px; margin: 3px 0; background: radial-gradient(circle, #aaa 1px, transparent 1px) center / 4px 4px repeat-y; }

.drop { display: grid; place-items: center; flex: none; width: 15px; height: 28px; }
.drop::before, .tri, .scope::after { content: ""; border: 4px solid transparent; border-top: 4px solid #111; border-bottom: 0; }
.muted::before { border-top-color: #aaa; }
.low { align-items: end; padding-bottom: 6px; }
.cut { width: 6px; justify-items: end; }
.slim { width: 12px; }

.search { display: flex; align-items: center; width: 163px; height: 24px; margin: 0 4px 0 6px; padding-right: 3px; border: 1px solid #888; background: #fff; }
.search input { flex: 1; min-width: 0; padding: 0 1px; border: 0; outline: 0; font-size: 15px; line-height: 20px; background: none; }
.search svg { width: 16px; height: 16px; }

.marked { position: relative; display: flex; margin-right: 6px; }
.marked::after {
  content: "";
  position: absolute;
  inset: -1px 0 -12px -5px;
  border: 4px solid #df1118;
  box-shadow: 1px 3px 5px #666;
  pointer-events: none;
}

.scope { display: flex; align-items: center; width: 174px; height: 24px; margin-right: 3px; padding-right: 6px; border: 1px solid #999; border-left: 0; overflow: hidden; }
.scope select { flex: 1; min-width: 0; height: 22px; margin-left: -6px; padding: 0; font-size: 15px; }
.scope::after, .tri { flex: none; border-width: 5px 5px 0; }
.scope::after { margin-left: 6px; }
select { appearance: none; border: 0; outline: 0; background: none; }

.cue { height: 28px; border-bottom: 2px solid #569eb8; }

/* graphics window */
.canvas {
  position: relative;
  flex: 1;
  min-height: 429px;
  overflow: hidden;
  background: linear-gradient(#b4b4b5, #c0c3c4 28%, #cdd1d3 59%, #dce1e4 97%, #e1e1e1 97%);
}
.model { position: absolute; left: 0; top: 0; }
.model text { font-family: "Noto Sans", sans-serif; }

.coords {
  position: absolute;
  left: 377px;
  top: 247px;
  width: 120px;
  display: grid;
  grid-template-columns: 12px 1fr;
  row-gap: 1px;
  padding: 2px 3px 2px 2px;
  border: 1px solid #aaa;
  background: #f2f2f2;
}
.coords .grip { grid-row: 1 / 4; width: 10px; background: radial-gradient(circle, #aaa 1px, transparent 1px) left / 5px 4px; }
.coords label { display: flex; align-items: center; gap: 1px; }
.coords label span { flex: 1; text-align: center; }
.coords input { width: 85px; height: 27px; padding: 0 2px 0 8px; border: 1px solid #999; outline: 0; background: #fff; font-size: 17px; }
.coords .short { padding-left: 13px; }

/* dialog */
.dialog { position: absolute; left: 87px; top: 141px; width: 395px; background: #f0f0f0; box-shadow: 0 0 2px #aaa; }
.titlebar { display: flex; align-items: center; gap: 9px; height: 29px; padding: 0 10px 0 9px; margin-bottom: 4px; background: #569eb8; color: #fff; }
.titlebar h1 { flex: 1; font-size: 20px; line-height: 28px; }
.titlebar svg { width: 16px; height: 16px; }
.panel { margin: 0 5px 3px; padding: 0 9px 8px; background: #fff; border-bottom: 1px solid #ccc; }
.panel h2 { display: flex; align-items: center; justify-content: space-between; margin: 0 -4px 6px -2px; height: 29px; color: #17719a; font-size: 20px; line-height: 28px; }
.fold svg { width: 18px; height: 14px; fill: #10668a; }
.kind, .combo { display: flex; align-items: center; height: 29px; border: 1px solid #aaa; background: #fff; }
.kind { padding: 0 6px 0 2px; gap: 8px; }
.kind-value { flex: 1; display: flex; align-items: center; gap: 2px; height: 25px; border: 1px dotted #666; background: #add8e3; }
.kind-value svg { width: 17px; height: 17px; }
.kind-value select { flex: 1; }
.field { display: flex; align-items: center; justify-content: space-between; }
.combo { width: 144px; padding-right: 6px; }
.combo select { flex: 1; padding: 0 4px; }
.orient { display: flex; align-items: center; height: 30px; gap: 2px; }
.step { flex: 1; display: flex; align-items: center; height: 30px; gap: 4px; padding-left: 1px; background: #ffdc73; }
.step svg { width: 14px; height: 14px; }
.point { display: grid; place-items: center; width: 23px; height: 23px; border: 1px solid #bbb; background: #fff; }
.point svg { width: 21px; height: 21px; }
.triad { display: grid; place-items: center; width: 30px; height: 30px; margin-left: 1px; background: #ffdc73; }
.triad svg { width: 24px; height: 24px; }
.actions { display: flex; justify-content: flex-end; gap: 5px; padding: 7px 16px 10px; }
.btn { width: 60px; height: 29px; border: 1px solid #aaa; background: #dcdcdc; }
.primary { border-color: #6bb1c7; background: #6bb1c7; color: #fff; }

/* overlaid signature */
.mark { position: absolute; display: flex; align-items: center; height: 58px; color: #333; opacity: .2; pointer-events: none; white-space: nowrap; }
.mark b { width: 160px; font: 900 37px/54px "Noto Sans CJK SC", sans-serif; -webkit-text-stroke: 1px #333; }
.mark span { font: 51px/58px "Liberation Serif", serif; }
.mark b, .mark span { border-radius: 12px; background: rgba(255, 255, 255, .4); }
.mark-a { left: 151px; top: 344px; }
.mark-b { left: 88px; top: 436px; }
.mark-c { left: 34px; top: 528px; }
.mark-a b, .mark-a span { background: none; }
```
